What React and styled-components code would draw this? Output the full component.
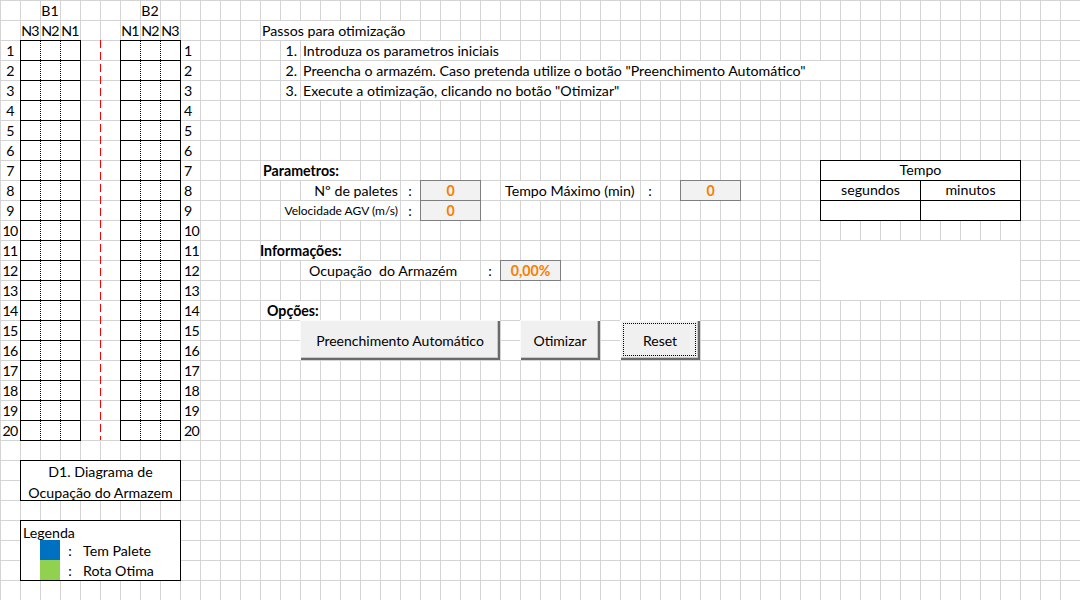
import React from "react"
import styled, { createGlobalStyle, css } from "styled-components"

const GlobalStyle = createGlobalStyle`
  html, body {
    margin: 0;
    padding: 0;
    background: #fff;
  }
  body {
    font-family: Lato, "Liberation Sans", sans-serif;
    color: #000;
    overflow: hidden;
  }
`

// place an item on the sheet by cell index (0 based) and span
const at = css`
  grid-column: ${p => p.$c + 1} / span ${p => p.$w || 1};
  grid-row: ${p => p.$r + 1} / span ${p => p.$h || 1};
`

// white fill that keeps the cell's own top/left gridline, like overflowing text in excel
const cover = css`
  background: linear-gradient(#fff, #fff) no-repeat 1px 1px / calc(100% - 1px) calc(100% - 1px);
`

// a bordered block that also draws on the gridline to its right and below
const framed = css`
  margin: 0 -1px -1px 0;
  border: 1px solid #000;
`

const Sheet = styled.div`
  display: grid;
  grid-template-columns: repeat(54, 20px);
  grid-template-rows: repeat(30, 20px);
  width: 1080px;
  height: 600px;
  background-color: #fff;
  background-image: linear-gradient(to right, #d4d4d4 1px, transparent 1px),
    linear-gradient(to bottom, #d4d4d4 1px, transparent 1px);
  background-size: 20px 20px;
  font-size: 14.2px;
  line-height: 22px;
  white-space: nowrap;
  overflow: hidden;
`

const Label = styled.div`
  ${at}
  ${p => p.$cover && cover}
  text-align: ${p => p.$align || "left"};
  padding: 0 ${p => p.$pr || 0}px 0 ${p => p.$pl || 0}px;
  font-weight: ${p => (p.$bold ? 700 : 400)};
  font-size: ${p => p.$size || 14.2}px;
  letter-spacing: ${p => (p.$tight ? "-0.7px" : "normal")};
`

const Divider = styled.div`
  ${at}
  width: 1px;
  background: repeating-linear-gradient(to bottom, #ff0000 0 8px, #fff 8px 12px);
`

const Bay = styled.div`
  ${at}
  ${framed}
  background: #000;
  display: grid;
  grid-template-rows: repeat(20, 1fr);
  row-gap: 1px;
`

const BaySlot = styled.div`
  display: grid;
  grid-template-columns: 19px 20px 20px;
  background: #fff;
`

const Level = styled.span`
  & + & {
    border-left: 1px dotted #000;
  }
`

const Caption = styled.div`
  ${at}
  ${framed}
  background: #fff;
  display: flex;
  flex-direction: column;
  align-items: center;
  line-height: 20.5px;
  padding-top: 1px;
`

const Legend = styled.div`
  ${at}
  ${framed}
  background: #fff;
  display: grid;
  grid-template-columns: 19px 20px 20px 1fr;
  grid-template-rows: 19px 20px 20px;
  line-height: 21px;
`

const LegendTitle = styled.div`
  grid-column: 1 / -1;
  padding-left: 2px;
  line-height: 23px;
`

const Swatch = styled.div`
  grid-column: 2;
  background: ${p => p.$color};
`

const LegendColon = styled.div`
  text-align: center;
`

const LegendText = styled.div`
  padding-left: 3px;
`

const Steps = styled.ol`
  ${at}
  list-style: none;
  margin: 0;
  padding: 0;
  display: grid;
  grid-template-rows: repeat(3, 20px);
`

const Step = styled.li`
  display: grid;
  grid-template-columns: 20px max-content;
  grid-template-rows: 20px;
`

const StepNo = styled.span`
  text-align: right;
  padding-right: 3px;
`

const StepText = styled.span`
  ${cover}
  padding: 0 18px 0 3px;
`

const Calc = styled.div`
  ${at}
  margin: 0 -1px -1px 0;
  border: 1px solid #7f7f7f;
  background: #f2f2f2;
  color: #fa7d00;
  font-weight: 700;
  text-align: center;
  line-height: 20px;
`

const TimeBox = styled.div`
  ${at}
  ${framed}
  background: #000;
  display: grid;
  grid-template-columns: 1fr 1fr;
  grid-template-rows: repeat(3, 1fr);
  gap: 1px;
  line-height: 18px;
`

const TimeCell = styled.div`
  grid-column: ${p => (p.$full ? "1 / -1" : "auto")};
  background: #fff;
  text-align: center;
`

const Blank = styled.div`
  ${at}
  ${cover}
`

const Button = styled.button`
  ${at}
  position: relative;
  border: none;
  padding: 0;
  background: #f0f0f0;
  box-shadow: inset 1px 1px #fbfbfb, inset -2px -2px #6a6a6a, inset -3px -3px #c8c8c8;
  font-family: Lato, "Liberation Sans", sans-serif;
  font-size: 14px;
  color: #000;
  ${p =>
    p.$focused &&
    css`
      &::after {
        content: "";
        position: absolute;
        inset: 3px 4px 4px 3px;
        border: 1px dotted #000;
      }
    `}
`

const rows = Array.from({ length: 20 }, (_, i) => i + 1)

const steps = [
  "Introduza os parametros iniciais",
  'Preencha o armazém. Caso pretenda utilize o botão "Preenchimento Automático"',
  'Execute a otimização, clicando no botão "Otimizar"',
]

function Warehouse({ c, levels }) {
  return (
    <Bay $c={c} $r={2} $w={3} $h={20}>
      {rows.map(n => (
        <BaySlot key={n}>
          {levels.map(l => (
            <Level key={l} />
          ))}
        </BaySlot>
      ))}
    </Bay>
  )
}

export default function App() {
  return (
    <>
      <GlobalStyle />
      <Sheet>
        {/* diagram headers */}
        <Label $c={1} $r={0} $w={3} $align="center">B1</Label>
        <Label $c={6} $r={0} $w={3} $align="center">B2</Label>
        {["N3", "N2", "N1"].map((t, i) => (
          <Label key={t} $c={1 + i} $r={1} $align="center" $tight>{t}</Label>
        ))}
        {["N1", "N2", "N3"].map((t, i) => (
          <Label key={t} $c={6 + i} $r={1} $align="center" $tight>{t}</Label>
        ))}

        {rows.map(n => (
          <Label key={"l" + n} $c={0} $r={n + 1} $align="center" $tight>{n}</Label>
        ))}
        {rows.map(n => (
          <Label key={"r" + n} $c={9} $r={n + 1} $pl={4} $tight>{n}</Label>
        ))}

        <Warehouse c={1} levels={["N3", "N2", "N1"]} />
        <Divider $c={5} $r={2} $h={20} />
        <Warehouse c={6} levels={["N1", "N2", "N3"]} />

        <Caption $c={1} $r={23} $w={8} $h={2}>
          <span>D1. Diagrama de</span>
          <span>Ocupação do Armazem</span>
        </Caption>

        <Legend $c={1} $r={26} $w={8} $h={3}>
          <LegendTitle>Legenda</LegendTitle>
          <Swatch $color="#0070c0" />
          <LegendColon>:</LegendColon>
          <LegendText>Tem Palete</LegendText>
          <Swatch $color="#92d050" />
          <LegendColon>:</LegendColon>
          <LegendText>Rota Otima</LegendText>
        </Legend>

        {/* instructions */}
        <Label $c={13} $r={1} $w={8} $pl={2} $cover>Passos para otimização</Label>
        <Steps $c={14} $r={2} $w={27} $h={3}>
          {steps.map((s, i) => (
            <Step key={i}>
              <StepNo>{i + 1}.</StepNo>
              <StepText>{s}</StepText>
            </Step>
          ))}
        </Steps>

        {/* parameters */}
        <Label $c={13} $r={8} $w={5} $pl={3} $bold $cover>Parametros:</Label>
        <Label $c={15} $r={9} $w={5} $align="right" $pr={2} $cover>Nº de paletes</Label>
        <Label $c={20} $r={9} $align="center">:</Label>
        <Calc $c={21} $r={9} $w={3}>0</Calc>
        <Label $c={14} $r={10} $w={6} $align="right" $pr={2} $size={12} $cover>
          Velocidade AGV (m/s)
        </Label>
        <Label $c={20} $r={10} $align="center">:</Label>
        <Calc $c={21} $r={10} $w={3}>0</Calc>

        <Label $c={25} $r={9} $w={7} $pl={5} $cover>Tempo Máximo (min)</Label>
        <Label $c={32} $r={9} $align="center">:</Label>
        <Calc $c={34} $r={9} $w={3}>0</Calc>

        <Label $c={13} $r={12} $w={5} $bold $cover>Informações:</Label>
        <Label $c={15} $r={13} $w={9} $pl={9} $cover>Ocupação&nbsp; do Armazém</Label>
        <Label $c={24} $r={13} $align="center">:</Label>
        <Calc $c={25} $r={13} $w={3}>0,00%</Calc>

        <Label $c={13} $r={15} $w={3} $pl={7} $bold $cover>Opções:</Label>
        <Button $c={15} $r={16} $w={10} $h={2}>Preenchimento Automático</Button>
        <Button $c={26} $r={16} $w={4} $h={2}>Otimizar</Button>
        <Button $c={31} $r={16} $w={4} $h={2} $focused>Reset</Button>

        {/* timing */}
        <TimeBox $c={41} $r={8} $w={10} $h={3}>
          <TimeCell $full>Tempo</TimeCell>
          <TimeCell>segundos</TimeCell>
          <TimeCell>minutos</TimeCell>
          <TimeCell />
          <TimeCell />
        </TimeBox>
        <Blank $c={41} $r={12} $w={10} $h={3} />
      </Sheet>
    </>
  )
}
